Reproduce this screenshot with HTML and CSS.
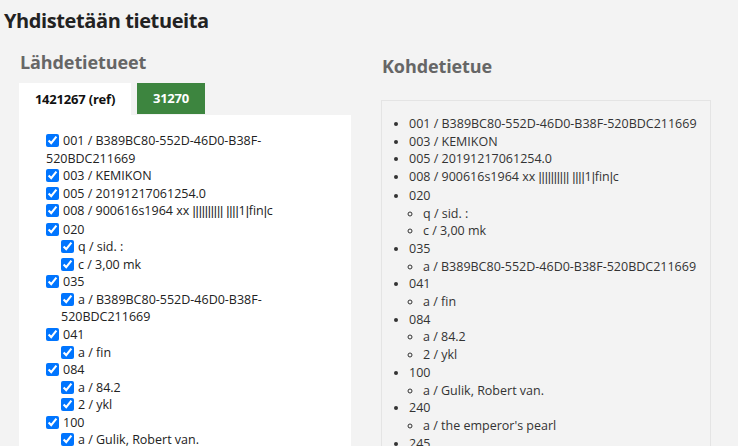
FILE: index.html
```html
<!DOCTYPE html>
<html lang="fi">
<head>
<meta charset="utf-8">
<title>Yhdistetään tietueita</title>
<link rel="stylesheet" href="styles.css">
</head>
<body>
<h1 class="page-title">Yhdistetään tietueita</h1>
<div class="columns">
  <section class="col col-source">
    <h2 class="section-title">Lähdetietueet</h2>
    <div class="tabs">
      <div class="tab tab-active">1421267 (ref)</div>
      <div class="tab tab-green">31270</div>
    </div>
    <div class="source-panel">
      <ul class="checklist">
        <li><input type="checkbox" checked>001 / B389BC80-552D-46D0-B38F-520BDC211669</li>
        <li><input type="checkbox" checked>003 / KEMIKON</li>
        <li><input type="checkbox" checked>005 / 20191217061254.0</li>
        <li><input type="checkbox" checked>008 / 900616s1964 xx <span class="pp">||||||||||</span> <span class="pp">||||</span>1<span class="pp">|</span>fin<span class="pp">|</span>c</li>
        <li><input type="checkbox" checked>020
          <ul class="checklist sub">
            <li><input type="checkbox" checked>q / sid. :</li>
            <li><input type="checkbox" checked>c / 3,00 mk</li>
          </ul>
        </li>
        <li><input type="checkbox" checked>035
          <ul class="checklist sub">
            <li><input type="checkbox" checked>a / B389BC80-552D-46D0-B38F-520BDC211669</li>
          </ul>
        </li>
        <li><input type="checkbox" checked>041
          <ul class="checklist sub">
            <li><input type="checkbox" checked>a / fin</li>
          </ul>
        </li>
        <li><input type="checkbox" checked>084
          <ul class="checklist sub">
            <li><input type="checkbox" checked>a / 84.2</li>
            <li><input type="checkbox" checked>2 / ykl</li>
          </ul>
        </li>
        <li><input type="checkbox" checked>100
          <ul class="checklist sub">
            <li><input type="checkbox" checked>a / Gulik, Robert van.</li>
          </ul>
        </li>
      </ul>
    </div>
  </section>
  <section class="col col-target">
    <h2 class="section-title target-title">Kohdetietue</h2>
    <div class="target-panel">
      <ul class="bullets">
        <li>001 / B389BC80-552D-46D0-B38F-520BDC211669</li>
        <li>003 / KEMIKON</li>
        <li>005 / 20191217061254.0</li>
        <li>008 / 900616s1964 xx <span class="pp">||||||||||</span> <span class="pp">||||</span>1<span class="pp">|</span>fin<span class="pp">|</span>c</li>
        <li>020
          <ul class="bullets sub"><li>q / sid. :</li><li>c / 3,00 mk</li></ul>
        </li>
        <li>035
          <ul class="bullets sub"><li>a / B389BC80-552D-46D0-B38F-520BDC211669</li></ul>
        </li>
        <li>041
          <ul class="bullets sub"><li>a / fin</li></ul>
        </li>
        <li>084
          <ul class="bullets sub"><li>a / 84.2</li><li>2 / ykl</li></ul>
        </li>
        <li>100
          <ul class="bullets sub"><li>a / Gulik, Robert van.</li></ul>
        </li>
        <li>240
          <ul class="bullets sub"><li>a / the emperor's pearl</li></ul>
        </li>
        <li>245</li>
      </ul>
    </div>
  </section>
</div>
</body>
</html>
```

FILE: styles.css
```css
html, body {
  margin: 0;
  padding: 0;
  background: #f3f3f3;
  font-family: "Open Sans", "Noto Sans", sans-serif;
  color: #212529;
}
body {
  padding: 8px 4px 0 4px;
  overflow: hidden;
  height: 446px;
  box-sizing: border-box;
}
.page-title {
  margin: 0;
  font-size: 20px;
  line-height: 26px;
  font-weight: 700;
  color: #222;
  letter-spacing: -0.4px;
}
.columns {
  display: grid;
  grid-template-columns: 365px 1fr;
  margin-top: 16px;
}
.col-source {
  padding-left: 15px;
}
.col-target {
  padding-left: 12px;
  padding-right: 23px;
}
.section-title {
  margin: 0;
  font-size: 18px;
  line-height: 24px;
  font-weight: 700;
  color: #666;
  letter-spacing: -0.1px;
  padding-left: 1px;
}
.target-title {
  margin-top: 4px;
}
.tabs {
  display: flex;
  gap: 6px;
  margin-top: 9px;
  height: 32px;
}
.tab {
  font-size: 13px;
  font-weight: 700;
  line-height: 32px;
  letter-spacing: -0.2px;
}
.tab-active {
  background: #fff;
  color: #111;
  width: 112px;
  text-align: center;
}
.tab-green {
  background: #3d853f;
  color: #fff;
  width: 68px;
  text-align: center;
  height: 31px;
  line-height: 31px;
}
.source-panel {
  background: #fff;
  width: 332px;
  height: 400px;
  padding: 17px 20px 0 27px;
  box-sizing: border-box;
}
.checklist {
  list-style: none;
  margin: 0;
  padding: 0;
  font-size: 12.5px;
  line-height: 17.55px;
  color: #222;
}
.checklist.sub {
  padding-left: 15px;
}
.checklist input {
  width: 13px;
  height: 13px;
  margin: 0 4px 0 0;
  vertical-align: -2px;
}
.pp {
  font-family: "Liberation Sans", sans-serif;
  letter-spacing: -0.2px;
}
.target-panel {
  border: 1px solid #e4e4e4;
  background: #f3f3f3;
  margin-top: 22px;
  height: 400px;
  padding: 14px 0 0 0;
  box-sizing: border-box;
}
.bullets {
  margin: 0;
  padding: 0 0 0 27px;
  font-size: 12.5px;
  line-height: 17.7px;
  color: #333;
  list-style: disc;
}
.bullets.sub {
  padding-left: 14px;
  list-style: circle;
}
.bullets li::marker {
  font-size: 11px;
}
```
